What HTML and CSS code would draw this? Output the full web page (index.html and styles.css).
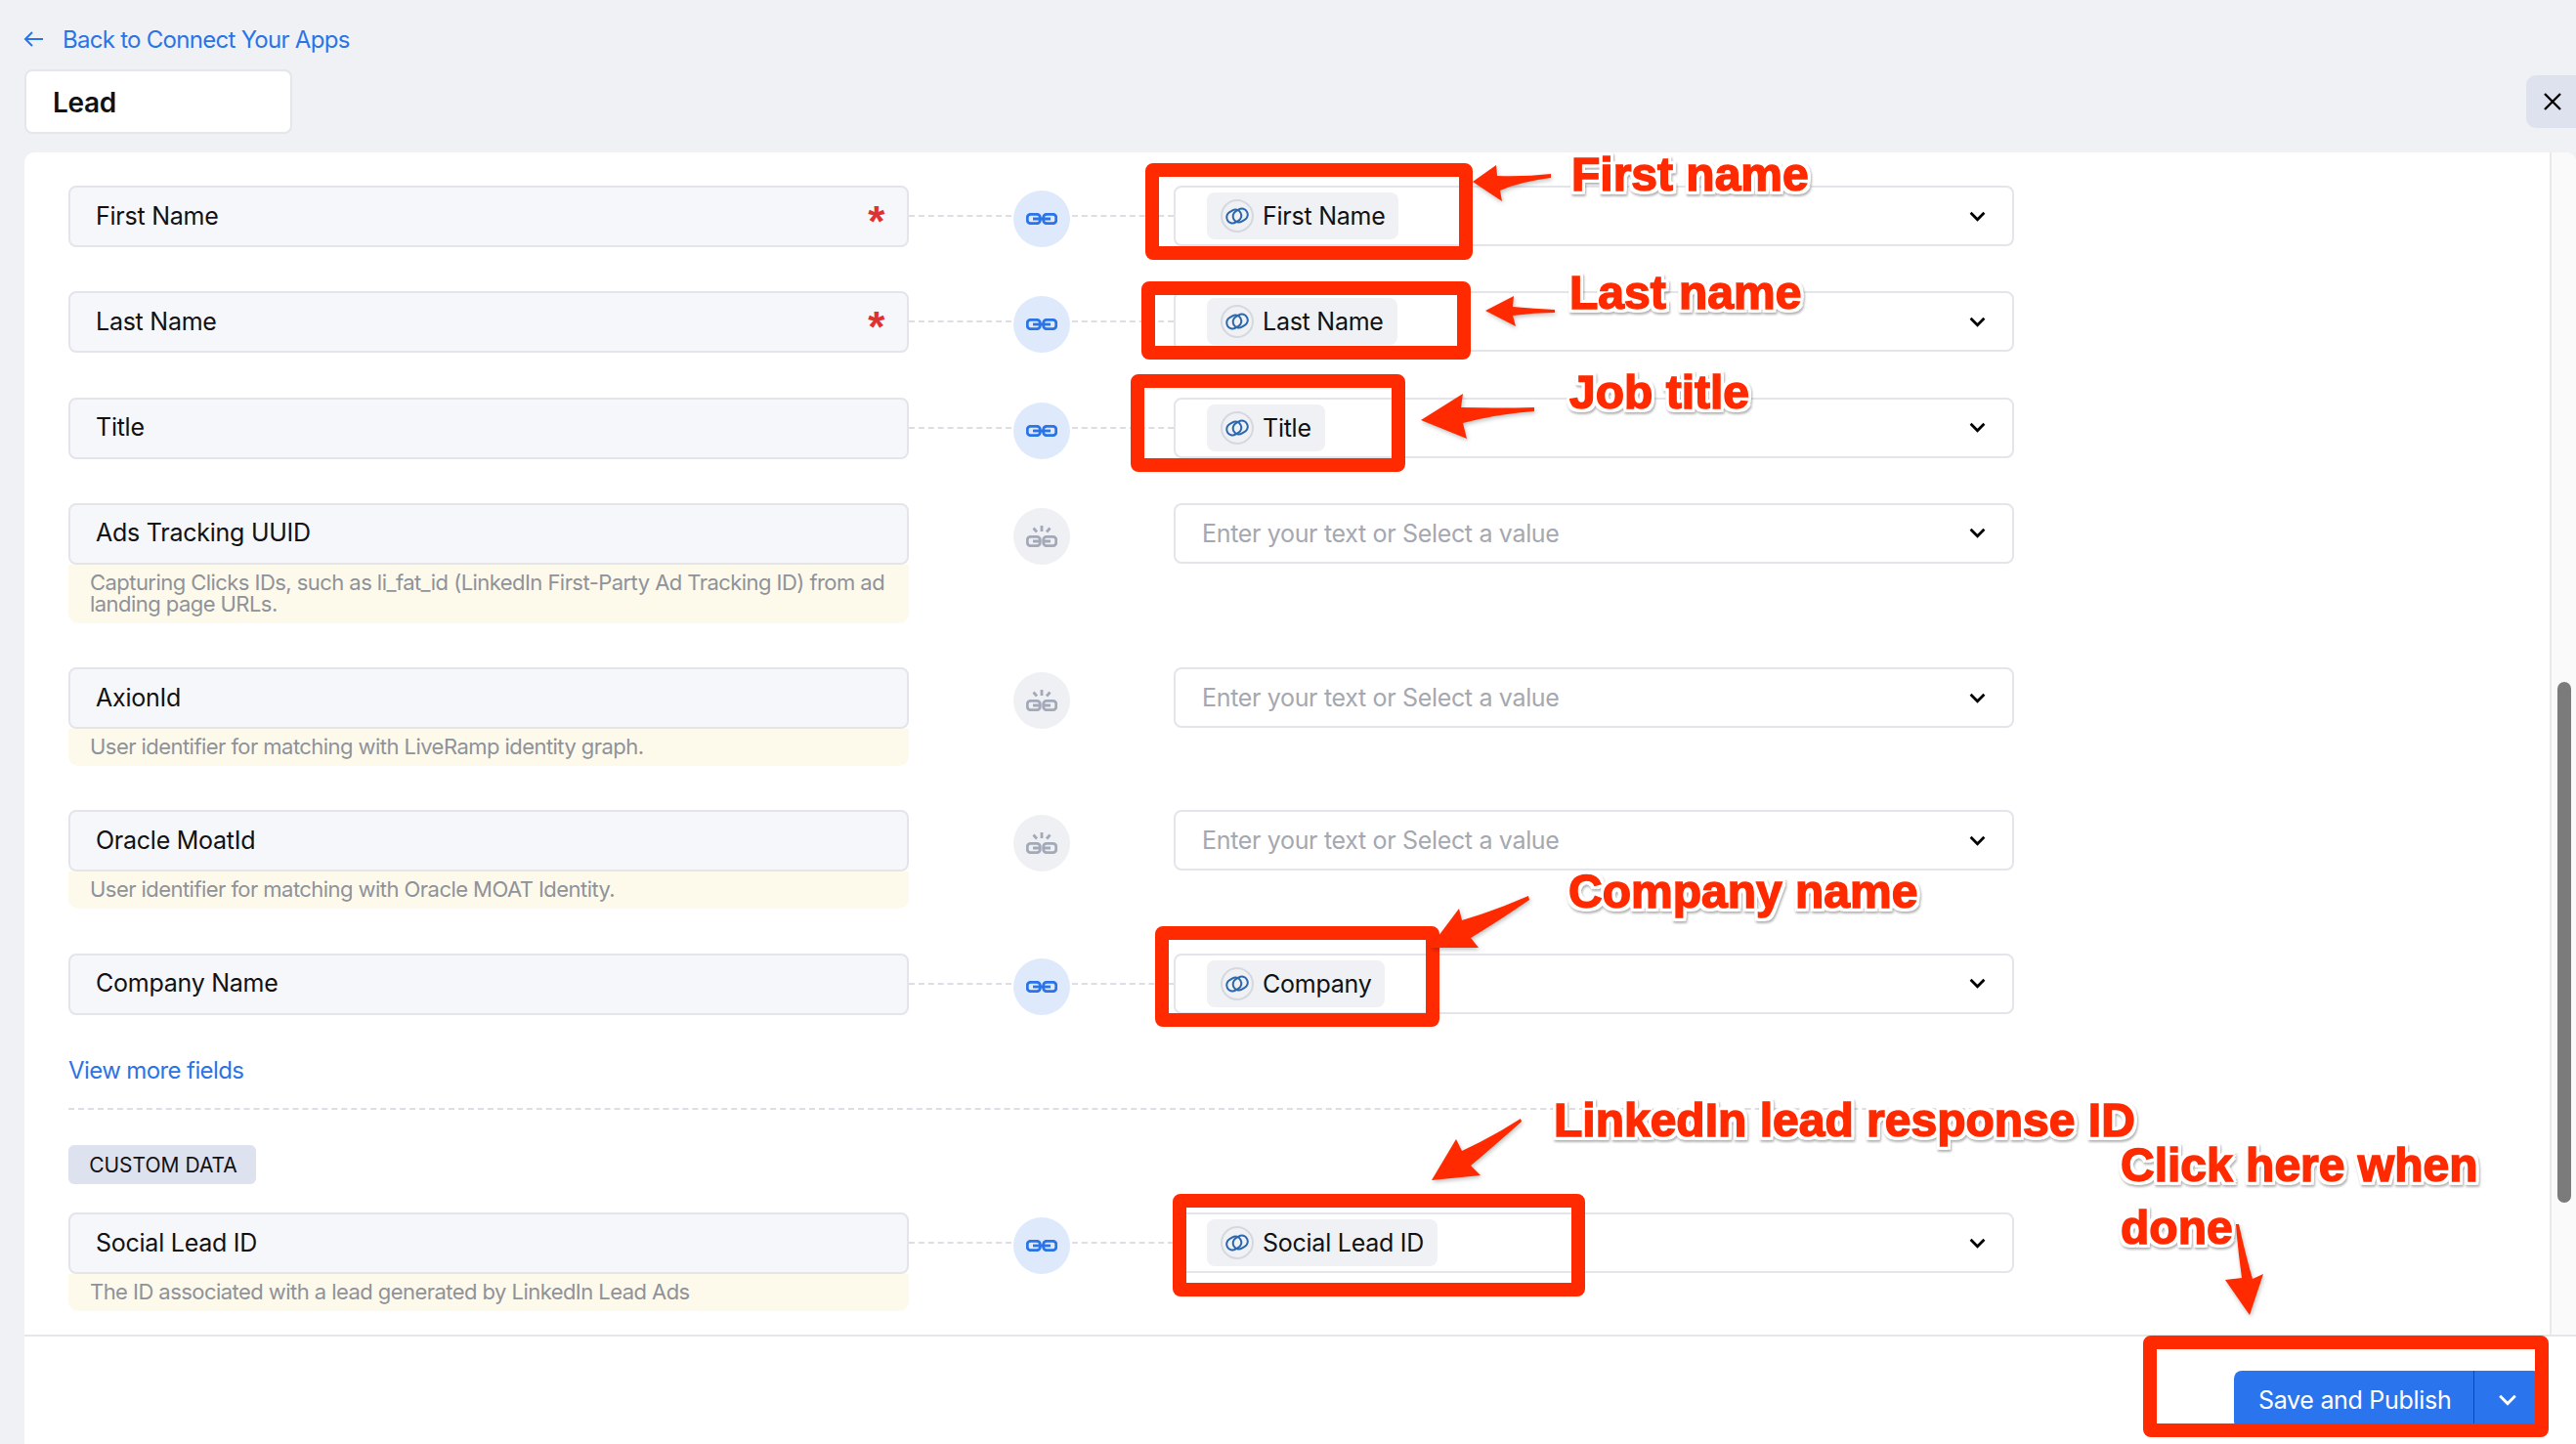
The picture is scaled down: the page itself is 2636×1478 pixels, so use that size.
FILE: index.html
```html
<!DOCTYPE html>
<html>
    <head>
        <title>Lead</title>
        <link rel="stylesheet" href="styles.css">
    </head>
    <body>
        <svg width="0" height="0" class="defs">
            <symbol id="linked" viewBox="0 0 32 12">
                <rect x="1.3" y="1.3" width="13" height="9.4" rx="3.2"/>
                <rect x="17.7" y="1.3" width="13" height="9.4" rx="3.2"/>
                <path d="M7 6H25"/>
            </symbol>
            <symbol id="broken" viewBox="0 0 32 22">
                <rect x="1.3" y="11.3" width="13" height="9.4" rx="3.2"/>
                <rect x="17.7" y="11.3" width="13" height="9.4" rx="3.2"/>
                <path d="M7 16H14M18 16H25M16 0V6M7.5 2.5L11 6.5M24.5 2.5L21 6.5"/>
            </symbol>
            <symbol id="chevron" viewBox="0 0 16 10">
                <path d="M1.5 1.5L8 8L14.5 1.5"/>
            </symbol>
            <symbol id="rings" viewBox="0 0 26 18">
                <rect x="2" y="3.5" width="15.5" height="12" rx="6" transform="rotate(-30 9.75 9.5)"/>
                <rect x="8.5" y="2.5" width="15.5" height="12" rx="6" transform="rotate(-30 16.25 8.5)"/>
            </symbol>
        </svg>

        <header class="top">
            <a class="back" href="#">
                <svg class="back-arrow" viewBox="0 0 21 18"><path d="M20 9H2M9 2L2 9L9 16"/></svg>
                Back to Connect Your Apps
            </a>
            <div class="tab-row">
                <div class="tab">Lead</div>
                <button class="close">
                    <svg viewBox="0 0 18 18"><path d="M1 1L17 17M17 1L1 17"/></svg>
                </button>
            </div>
        </header>

        <main class="panel">
            <div class="panel-body">
                <div class="fields">
                    <div class="row">
                        <div class="field">First Name<span class="req">*</span></div>
                        <div class="link"><span class="dash dash-left"></span><span class="circle"><svg class="ic-linked"><use href="#linked"/></svg></span><span class="dash"></span></div>
                        <div class="select"><span class="chip"><span class="chip-ic"><svg><use href="#rings"/></svg></span>First Name</span><svg class="chev"><use href="#chevron"/></svg></div>
                    </div>
                    <div class="row">
                        <div class="field">Last Name<span class="req">*</span></div>
                        <div class="link"><span class="dash dash-left"></span><span class="circle"><svg class="ic-linked"><use href="#linked"/></svg></span><span class="dash"></span></div>
                        <div class="select"><span class="chip"><span class="chip-ic"><svg><use href="#rings"/></svg></span>Last Name</span><svg class="chev"><use href="#chevron"/></svg></div>
                    </div>
                    <div class="row">
                        <div class="field">Title</div>
                        <div class="link"><span class="dash dash-left"></span><span class="circle"><svg class="ic-linked"><use href="#linked"/></svg></span><span class="dash"></span></div>
                        <div class="select"><span class="chip"><span class="chip-ic"><svg><use href="#rings"/></svg></span>Title</span><svg class="chev"><use href="#chevron"/></svg></div>
                    </div>
                    <div class="row">
                        <div>
                            <div class="field">Ads Tracking UUID</div>
                            <div class="help">Capturing Clicks IDs, such as li_fat_id (LinkedIn First-Party Ad Tracking ID) from ad landing page URLs.</div>
                        </div>
                        <div class="link link-off"><span class="dash dash-left"></span><span class="circle circle-off"><svg class="ic-broken"><use href="#broken"/></svg></span><span class="dash"></span></div>
                        <div class="select"><span class="placeholder">Enter your text or Select a value</span><svg class="chev"><use href="#chevron"/></svg></div>
                    </div>
                    <div class="row">
                        <div>
                            <div class="field">AxionId</div>
                            <div class="help">User identifier for matching with LiveRamp identity graph.</div>
                        </div>
                        <div class="link link-off"><span class="dash dash-left"></span><span class="circle circle-off"><svg class="ic-broken"><use href="#broken"/></svg></span><span class="dash"></span></div>
                        <div class="select"><span class="placeholder">Enter your text or Select a value</span><svg class="chev"><use href="#chevron"/></svg></div>
                    </div>
                    <div class="row">
                        <div>
                            <div class="field">Oracle MoatId</div>
                            <div class="help">User identifier for matching with Oracle MOAT Identity.</div>
                        </div>
                        <div class="link link-off"><span class="dash dash-left"></span><span class="circle circle-off"><svg class="ic-broken"><use href="#broken"/></svg></span><span class="dash"></span></div>
                        <div class="select"><span class="placeholder">Enter your text or Select a value</span><svg class="chev"><use href="#chevron"/></svg></div>
                    </div>
                    <div class="row">
                        <div class="field">Company Name</div>
                        <div class="link"><span class="dash dash-left"></span><span class="circle"><svg class="ic-linked"><use href="#linked"/></svg></span><span class="dash"></span></div>
                        <div class="select"><span class="chip"><span class="chip-ic"><svg><use href="#rings"/></svg></span>Company</span><svg class="chev"><use href="#chevron"/></svg></div>
                    </div>

                    <a class="more" href="#">View more fields</a>
                    <div class="divider"></div>
                    <div class="section-tag">CUSTOM DATA</div>

                    <div class="row">
                        <div>
                            <div class="field">Social Lead ID</div>
                            <div class="help">The ID associated with a lead generated by LinkedIn Lead Ads</div>
                        </div>
                        <div class="link"><span class="dash dash-left"></span><span class="circle"><svg class="ic-linked"><use href="#linked"/></svg></span><span class="dash"></span></div>
                        <div class="select"><span class="chip"><span class="chip-ic"><svg><use href="#rings"/></svg></span>Social Lead ID</span><svg class="chev"><use href="#chevron"/></svg></div>
                    </div>
                </div>
                <div class="track"><div class="thumb"></div></div>
            </div>
            <footer class="bottom">
                <div class="publish">
                    <span class="publish-main">Save and Publish</span>
                    <span class="publish-more"><svg><use href="#chevron"/></svg></span>
                </div>
            </footer>
        </main>

        <!-- Anotaciones rojas encima de la captura -->
        <div class="box box-first"></div>
        <div class="box box-last"></div>
        <div class="box box-title"></div>
        <div class="box box-company"></div>
        <div class="box box-social"></div>
        <div class="box box-save"></div>

        <svg class="arrows" viewBox="0 0 2636 1478">
            <path d="M1507 186L1531 169L1532 180Q1560 181 1587 178L1587 182Q1555 186 1535 195L1537 206Z"/>
            <path d="M1520 318L1549 303L1548 314Q1570 316 1591 317L1591 320Q1570 320 1548 323L1551 334Z"/>
            <path d="M1454 430L1497 403L1495 417Q1532 418 1570 417L1570 421Q1530 424 1497 433L1501 449Z"/>
            <path d="M1463 970L1493 930L1496 942Q1530 932 1564 917L1565 921Q1530 945 1505 960L1513 970Z"/>
            <path d="M1465 1208L1490 1166L1496 1178Q1525 1165 1556 1145L1557 1148Q1530 1172 1505 1193L1515 1203Z"/>
            <path d="M2288 1253L2291 1253Q2298 1285 2305 1309L2316 1304L2302 1346L2277 1310L2294 1308Q2290 1280 2288 1253Z"/>
        </svg>

        <div class="note note-first">First name</div>
        <div class="note note-last">Last name</div>
        <div class="note note-job">Job title</div>
        <div class="note note-company">Company name</div>
        <div class="note note-linkedin">LinkedIn lead response ID</div>
        <div class="note note-click">Click here when<br>done</div>
    </body>
</html>
```

FILE: styles.css
```css
*
{
    box-sizing: border-box;
}
body
{
    margin: 0;
    width: 2636px;
    height: 1478px;
    overflow: hidden;
    position: relative;
    background-color: #f0f1f5;
    font-family: "Inter", "Noto Sans", sans-serif;
    color: #111;
    display: flex;
    flex-direction: column;
}
.defs
{
    position: absolute;
}

/* Cabecera */
.top
{
    height: 156px;
    padding: 26px 0 0 25px;
    flex: none;
}
.back
{
    display: flex;
    align-items: center;
    gap: 19px;
    height: 28px;
    margin-left: -1px;
    font-size: 24px;
    letter-spacing: -0.72px;
    color: #2a74e8;
    text-decoration: none;
}
.back-arrow
{
    width: 21px;
    height: 18px;
    fill: none;
    stroke: #2a74e8;
    stroke-width: 2;
}
.tab-row
{
    display: flex;
    justify-content: space-between;
    align-items: center;
    margin-top: 17px;
}
.tab
{
    width: 274px;
    height: 66px;
    padding: 2px 0 0 27px;
    display: flex;
    align-items: center;
    background-color: #fff;
    border: 2px solid #e4e6ec;
    border-radius: 8px;
    font-size: 28px;
    font-weight: 600;
    letter-spacing: -0.3px;
}
.close
{
    width: 51px;
    height: 54px;
    padding: 0 0 0 2px;
    display: flex;
    align-items: center;
    justify-content: center;
    background-color: #dde2ee;
    border: none;
    border-radius: 10px 0 0 10px;
}
.close svg
{
    width: 18px;
    height: 18px;
    fill: none;
    stroke: #000;
    stroke-width: 2.4;
}

/* Panel */
.panel
{
    flex: 1;
    margin-left: 25px;
    display: flex;
    flex-direction: column;
    background-color: #fff;
    border-radius: 10px 10px 0 0;
    overflow: hidden;
}
.panel-body
{
    height: 1210px;
    display: flex;
    flex: none;
}
.fields
{
    flex: 1;
    padding: 34px 0 0 45px;
}
.track
{
    width: 27px;
    padding: 542px 0 0 6px;
    background-color: #fafafa;
    border-left: 2px solid #e9e9e9;
}
.thumb
{
    width: 14px;
    height: 533px;
    background-color: #7b7b7b;
    border-radius: 7px;
}

/* Filas de campos */
.row
{
    display: grid;
    grid-template-columns: 860px 271px 860px;
    margin-bottom: 45.3px;
}
.field
{
    height: 63px;
    padding: 0 23px 2px 26px;
    display: flex;
    align-items: center;
    justify-content: space-between;
    background-color: #f6f7fb;
    border: 2px solid #e3e5eb;
    border-radius: 8px;
    font-size: 25px;
    letter-spacing: -0.25px;
}
.req
{
    margin-top: 13px;
    font-family: "Liberation Sans", sans-serif;
    font-weight: 700;
    font-size: 44px;
    line-height: 1;
    color: #e03131;
}
.help
{
    padding: 7px 10px 9px 22px;
    background-color: #fdfaec;
    border-radius: 0 0 10px 10px;
    font-size: 22px;
    line-height: 22px;
    letter-spacing: -0.55px;
    color: #8f9299;
}
.link
{
    display: flex;
    align-items: flex-start;
}
.dash
{
    flex: 1;
    margin-top: 30px;
    border-top: 2px dashed #dcdee3;
}
.dash-left
{
    flex: none;
    width: 105px;
}
.link-off .dash
{
    border-color: transparent;
}
.circle
{
    width: 58px;
    height: 58px;
    margin: 5px 2px 0;
    flex: none;
    display: flex;
    align-items: center;
    justify-content: center;
    background-color: #deeafc;
    border-radius: 50%;
}
.circle-off
{
    background-color: #eff0f4;
}
.ic-linked
{
    width: 32px;
    height: 12px;
    fill: none;
    stroke: #2a74e8;
    stroke-width: 2.8;
}
.ic-broken
{
    width: 32px;
    height: 22px;
    fill: none;
    stroke: #a3a9b8;
    stroke-width: 2.8;
}
.select
{
    height: 62px;
    padding: 0 27px 0 32px;
    display: flex;
    align-items: center;
    justify-content: space-between;
    background-color: #fff;
    border: 2px solid #e3e5eb;
    border-radius: 8px;
    font-size: 25px;
    letter-spacing: -0.25px;
}
.placeholder
{
    margin-left: -5px;
    letter-spacing: -0.33px;
    color: #a5a8b0;
}
.chip
{
    height: 48px;
    padding: 0 14px;
    display: flex;
    align-items: center;
    gap: 9px;
    background-color: #f0f1f5;
    border-radius: 8px;
}
.chip-ic
{
    width: 34px;
    height: 34px;
    display: flex;
    align-items: center;
    justify-content: center;
    background-color: #f0f1f5;
    border: 2px solid #d5d8de;
    border-radius: 50%;
}
.chip-ic svg
{
    width: 26px;
    height: 18px;
    fill: none;
    stroke: #2b67ad;
    stroke-width: 2;
}
.chev
{
    width: 17px;
    height: 11px;
    fill: none;
    stroke: #000;
    stroke-width: 2.6;
}

/* Parte inferior de los campos */
.more
{
    display: block;
    margin-top: -3px;
    font-size: 24px;
    line-height: 30px;
    letter-spacing: -0.6px;
    color: #2a74e8;
    text-decoration: none;
}
.divider
{
    width: 1991px;
    margin-top: 23px;
    border-top: 2px dashed #dcdee3;
}
.section-tag
{
    width: 192px;
    height: 40px;
    margin: 36px 0 29px;
    padding-left: 2px;
    display: flex;
    align-items: center;
    justify-content: center;
    background-color: #dde2ee;
    border-radius: 6px;
    font-size: 21px;
}
.bottom
{
    flex: 1;
    padding: 35px 36px 0 0;
    display: flex;
    justify-content: flex-end;
    align-items: flex-start;
    border-top: 2px solid #e4e6eb;
}
.publish
{
    height: 60px;
    display: flex;
    background-color: #2a74ee;
    border-radius: 8px;
    color: #fff;
    font-size: 25px;
    letter-spacing: -0.3px;
}
.publish-main
{
    width: 246px;
    padding-left: 25px;
    display: flex;
    align-items: center;
    border-right: 1px solid #16499a;
}
.publish-more
{
    width: 68px;
    display: flex;
    align-items: center;
    justify-content: center;
}
.publish-more svg
{
    width: 20px;
    height: 12px;
    fill: none;
    stroke: #fff;
    stroke-width: 2.4;
}

/* Anotaciones sobre la captura */
.box
{
    position: absolute;
    border: 14px solid #ff2a00;
    border-radius: 8px;
}
.box-first { left: 1172px; top: 167px; width: 335px; height: 99px; }
.box-last { left: 1168px; top: 288px; width: 337px; height: 80px; }
.box-title { left: 1157px; top: 383px; width: 281px; height: 100px; }
.box-company { left: 1182px; top: 948px; width: 291px; height: 103px; }
.box-social { left: 1200px; top: 1222px; width: 422px; height: 105px; }
.box-save { left: 2193px; top: 1367px; width: 415px; height: 104px; }
.arrows
{
    position: absolute;
    left: 0;
    top: 0;
    width: 2636px;
    height: 1478px;
    fill: #ff2a00;
    filter: drop-shadow(1px 2px 2px rgba(0, 0, 0, 0.25));
}
.note
{
    position: absolute;
    font-family: "Liberation Sans", sans-serif;
    font-weight: 700;
    font-size: 48px;
    line-height: 48px;
    white-space: nowrap;
    color: #ff2a00;
    -webkit-text-stroke: 1.5px #ff2a00;
    filter: drop-shadow(3px 0 0 #fff) drop-shadow(-3px 0 0 #fff) drop-shadow(0 3px 0 #fff) drop-shadow(0 -3px 0 #fff) drop-shadow(1px 2px 1px rgba(0, 0, 0, 0.3));
}
.note-first { left: 1608px; top: 155px; }
.note-last { left: 1606px; top: 276px; }
.note-job { left: 1606px; top: 378px; }
.note-company { left: 1605px; top: 889px; }
.note-linkedin { left: 1590px; top: 1123px; }
.note-click { left: 2170px; top: 1161px; line-height: 64px; }
```
